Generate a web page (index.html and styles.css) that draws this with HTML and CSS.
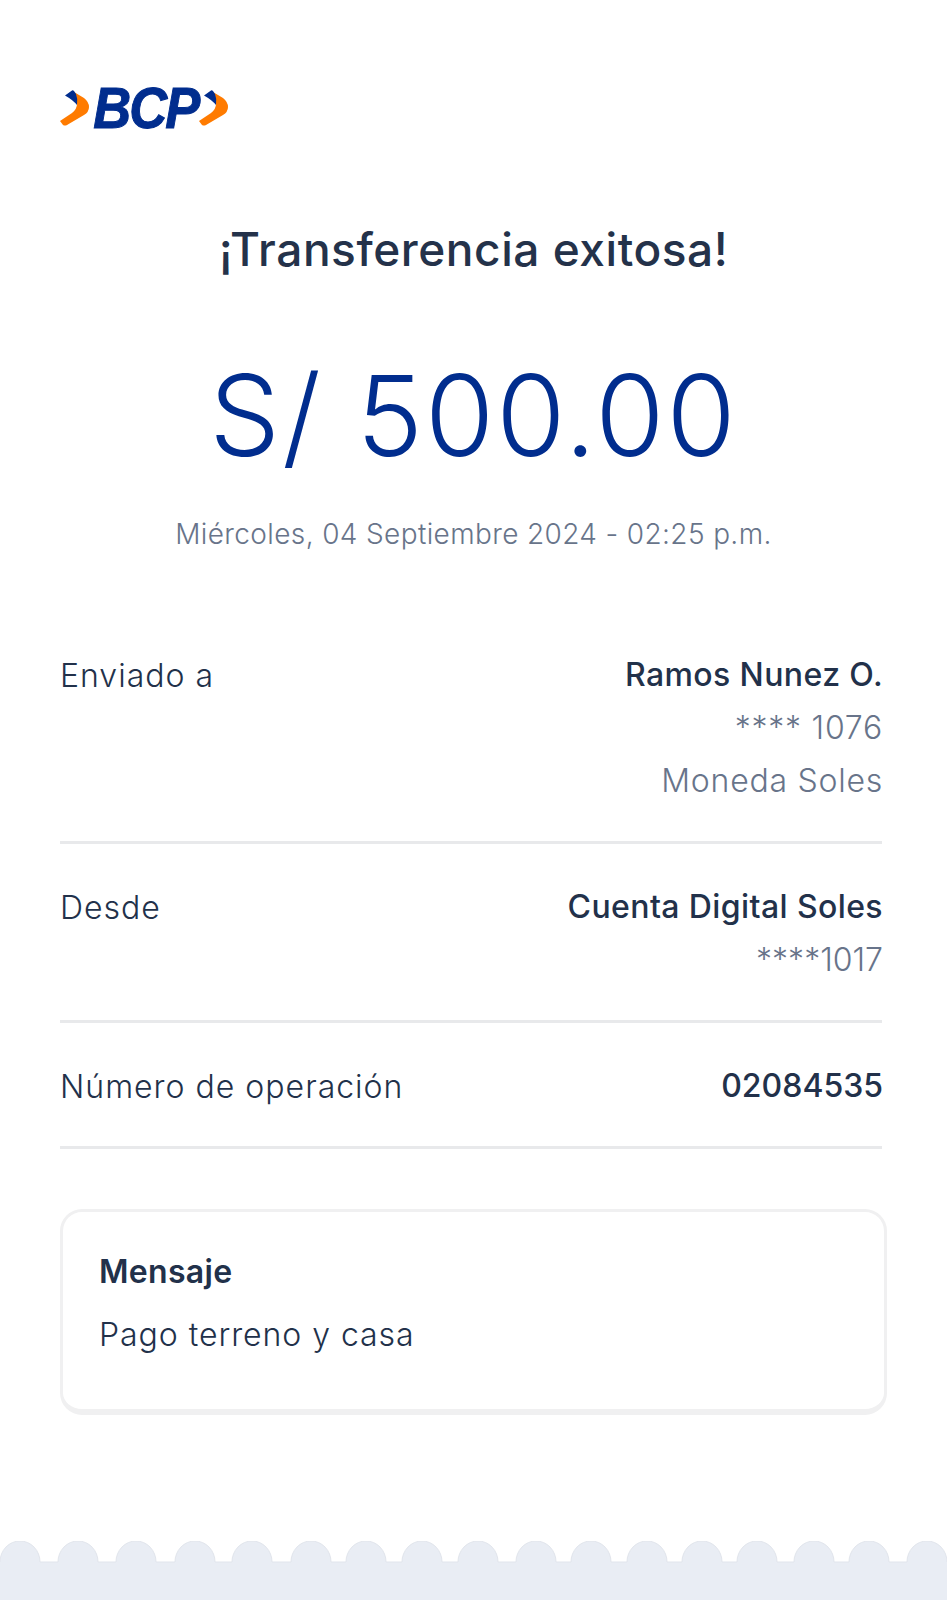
FILE: index.html
```html
<!DOCTYPE html>
<html>
	<head>
		<meta charset="utf-8">
		<title>Transferencia exitosa</title>
		<link rel="stylesheet" href="styles.css">
	</head>
	<body>
		<div class="page">
			<div class="logo">
				<svg class="chevron" viewBox="0 0 29 36"><use href="#chev"></use></svg>
				<span class="logo-text">BCP</span>
				<svg class="chevron" viewBox="0 0 29 36">
					<defs>
						<g id="chev">
							<path fill="#ff7b00" d="M14 2 24 8Q29 12 29 17 29 22 24 25L7 35Q5 36 3 35L0 31 12 23Q17 19 17 14 17 10 13 8Z"/>
							<path fill="#012d8e" d="M5 5.500 12 .5Q13 0 14 1L16 4Q18 9 17 15 13 10 5 5.500Z"/>
						</g>
					</defs>
					<use href="#chev"></use>
				</svg>
			</div>

			<h1 class="title">¡Transferencia exitosa!</h1>
			<div class="amount">S/ 500.00</div>
			<p class="date">Miércoles, 04 Septiembre 2024 - 02:25 p.m.</p>

			<div class="rows">
				<div class="row">
					<div class="label">Enviado a</div>
					<div class="values">
						<div class="strong">Ramos Nunez O.</div>
						<div class="muted">**** 1076</div>
						<div class="muted">Moneda Soles</div>
					</div>
				</div>
				<div class="row">
					<div class="label">Desde</div>
					<div class="values">
						<div class="strong">Cuenta Digital Soles</div>
						<div class="muted tight">****1017</div>
					</div>
				</div>
				<div class="row">
					<div class="label">Número de operación</div>
					<div class="values">
						<div class="strong tight">02084535</div>
					</div>
				</div>
			</div>

			<div class="message">
				<div class="message-title">Mensaje</div>
				<div class="message-text">Pago terreno y casa</div>
			</div>

			<svg class="scallops" viewBox="0 0 947 59">
				<path fill="#e9edf4" stroke="#e1e5ec" stroke-width="1" d="M-1 21H0A20 21 0 0 1 40 21H58A20 21 0 0 1 98 21H116A20 21 0 0 1 156 21H175A20 21 0 0 1 215 21H232A20 21 0 0 1 272 21H291A20 21 0 0 1 331 21H346A20 21 0 0 1 386 21H402A20 21 0 0 1 442 21H458A20 21 0 0 1 498 21H516A20 21 0 0 1 556 21H571A20 21 0 0 1 611 21H627A20 21 0 0 1 667 21H682A20 21 0 0 1 722 21H737A20 21 0 0 1 777 21H794A20 21 0 0 1 834 21H849A20 21 0 0 1 889 21H907A20 21 0 0 1 947 21H948V60H-1Z"/>
			</svg>
		</div>
	</body>
</html>
```

FILE: styles.css
```css
body {
	margin: 0;
	background-color: #ffffff;
	font-family: "Inter", sans-serif;
	color: #22314a;
}
.page {
	min-height: 1600px;
	display: flex;
	flex-direction: column;
	overflow: hidden;
}
.logo {
	display: flex;
	align-items: center;
	height: 46px;
	margin: 85px 0 0 60px;
}
.chevron {
	width: 29px;
	height: 36px;
}
.logo-text {
	display: inline-block;
	width: 106px;
	margin-right: 4px;
	text-align: center;
	font-family: "Liberation Sans", sans-serif;
	font-size: 57px;
	font-weight: bold;
	font-style: italic;
	letter-spacing: -2px;
	color: #012d8e;
	-webkit-text-stroke: 1px #012d8e;
	transform: scaleX(0.92);
}
.title {
	margin: 88px 0 0;
	text-align: center;
	font-size: 46px;
	line-height: 60px;
	font-weight: 500;
	letter-spacing: 0.55px;
	color: #24324a;
}
.amount {
	margin-top: 66px;
	text-align: center;
	font-size: 112px;
	line-height: 140px;
	font-weight: 350;
	letter-spacing: 2px;
	color: #012d8e;
}
.date {
	margin: 29px 0 0;
	text-align: center;
	font-size: 28px;
	line-height: 40px;
	font-weight: 300;
	letter-spacing: 0.37px;
	color: #68748a;
}
.rows {
	margin: 58px 65px 0 60px;
}
.row {
	display: flex;
	justify-content: space-between;
	padding: 36px 0 34px;
	border-bottom: 3px solid #e8e9eb;
}
.row:last-child {
	padding-bottom: 33px;
}
.label {
	margin-top: 1px;
	font-size: 32px;
	line-height: 53px;
	font-weight: 300;
	letter-spacing: 1px;
}
.values {
	margin-right: -1px;
	text-align: right;
	font-size: 32px;
	line-height: 53px;
}
.strong {
	font-weight: 500;
	letter-spacing: 0.4px;
}
.muted {
	font-weight: 300;
	letter-spacing: 0.75px;
	color: #68748a;
}
.tight {
	letter-spacing: 0;
}
.message {
	margin: 60px 60px 0;
	padding: 38px 36px 52px;
	border: 3px solid #f0f0f1;
	border-bottom-width: 6px;
	border-radius: 22px;
}
.message-title {
	font-size: 32px;
	line-height: 44px;
	font-weight: 600;
	letter-spacing: 0.3px;
}
.message-text {
	margin-top: 19px;
	font-size: 32px;
	line-height: 44px;
	font-weight: 300;
	letter-spacing: 0.95px;
}
.scallops {
	display: block;
	width: 947px;
	height: 59px;
	margin-top: auto;
}
```
